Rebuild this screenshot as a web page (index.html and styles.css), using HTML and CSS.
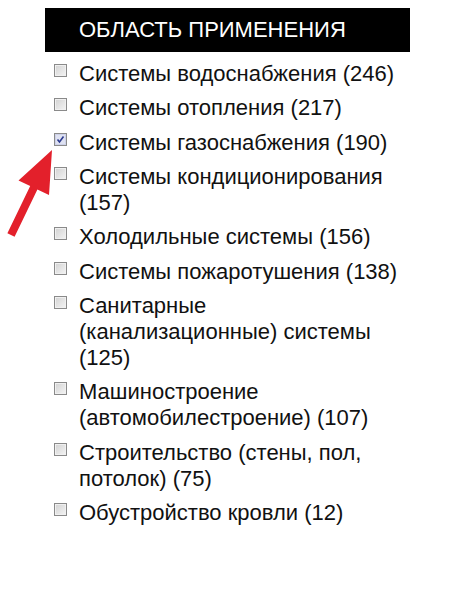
FILE: index.html
```html
<!DOCTYPE html>
<html lang="ru">
<head>
<meta charset="utf-8">
<link rel="stylesheet" href="styles.css">
</head>
<body>
<div class="panel">
  <div class="header">ОБЛАСТЬ ПРИМЕНЕНИЯ</div>
  <ul class="list">
    <li class="item"><span class="cb"></span><span class="label">Системы водоснабжения (246)</span></li>
    <li class="item"><span class="cb"></span><span class="label">Системы отопления (217)</span></li>
    <li class="item"><span class="cb checked"><svg viewBox="0 0 11 11" width="11" height="11"><path d="M2.5 5.5 L4.5 8 L8.5 2.5" fill="none" stroke="#2b3a8f" stroke-width="1.6"/></svg></span><span class="label">Системы газоснабжения (190)</span></li>
    <li class="item"><span class="cb"></span><span class="label">Системы кондиционирования (157)</span></li>
    <li class="item"><span class="cb"></span><span class="label">Холодильные системы (156)</span></li>
    <li class="item"><span class="cb"></span><span class="label">Системы пожаротушения (138)</span></li>
    <li class="item"><span class="cb"></span><span class="label">Санитарные (канализационные) системы (125)</span></li>
    <li class="item"><span class="cb"></span><span class="label">Машиностроение (автомобилестроение) (107)</span></li>
    <li class="item"><span class="cb"></span><span class="label">Строительство (стены, пол, потолок) (75)</span></li>
    <li class="item"><span class="cb"></span><span class="label">Обустройство кровли (12)</span></li>
  </ul>
</div>
<svg class="arrow" width="80" height="100" viewBox="0 140 80 100">
  <polygon points="52,150 49,195 37.4,189.5 14.6,236.7 7.4,233.3 30.2,186.1 18.5,180.4" fill="#e3202b"/>
</svg>
</body>
</html>
```
FILE: styles.css
```css
html, body {
  margin: 0;
  padding: 0;
  background: #ffffff;
}
body {
  position: relative;
  width: 450px;
  height: 600px;
  font-family: "Liberation Sans", Arial, sans-serif;
}
.panel {
  margin: 8px 0 0 45px;
  width: 365px;
}
.header {
  height: 44px;
  background: #000000;
  color: #ffffff;
  font-size: 22px;
  line-height: 44px;
  padding-left: 34px;
}
.list {
  list-style: none;
  margin: 0;
  padding: 9px 0 0 9px;
  display: flex;
  flex-direction: column;
  gap: 8.33px;
}
.item {
  display: flex;
  align-items: flex-start;
  gap: 12px;
  font-size: 22px;
  line-height: 26px;
  color: #111111;
}
.label {
  width: 328px;
}
.cb {
  flex: none;
  box-sizing: border-box;
  width: 13px;
  height: 13px;
  margin-top: 3px;
  border: 1px solid #8a8a8a;
  background: linear-gradient(135deg, #d2d2d2, #f4f4f4);
  box-shadow: inset 0 0 0 1px #f0f0f0;
  display: flex;
  align-items: center;
  justify-content: center;
}
.cb.checked {
  background: #dfe2f2;
  box-shadow: inset 0 0 0 1px #cdd1e8;
}
.arrow {
  position: absolute;
  left: 0;
  top: 140px;
}
```
